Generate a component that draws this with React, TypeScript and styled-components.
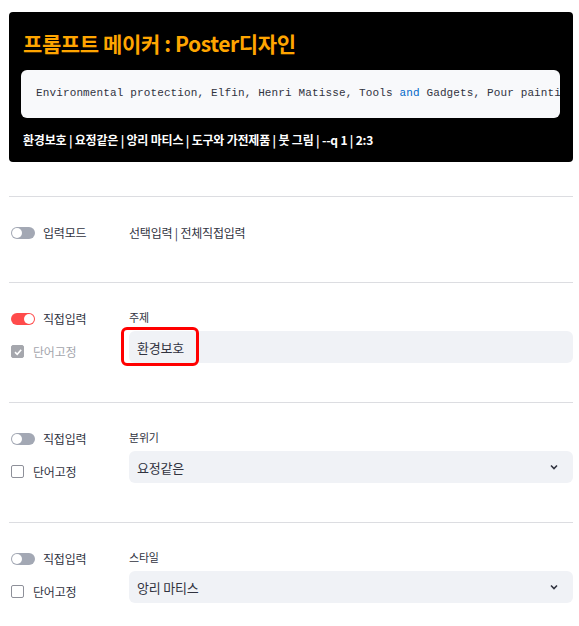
import React from "react";
import styled, { createGlobalStyle } from "styled-components";

const GlobalStyle = createGlobalStyle`
  body {
    margin: 0;
    background: #ffffff;
    font-family: "Noto Sans CJK KR", "Noto Sans", sans-serif;
    color: #31333f;
  }
`;

const Page = styled.div`
  padding: 12px 6px 0 9px;
  width: 564px;
`;

const Header = styled.div`
  background: #000000;
  border-radius: 4px;
  padding: 16px 13px 12px 12px;
`;

const Title = styled.h1`
  margin: 0 0 0 2px;
  color: #ffa500;
  font-size: 21px;
  font-weight: 700;
  line-height: 30px;
  letter-spacing: -0.4px;
`;

const CodeBox = styled.pre`
  margin: 12px 0 0;
  background: #f8f9fb;
  border-radius: 6px;
  height: 48px;
  box-sizing: border-box;
  padding: 0 0 3px 15px;
  display: flex;
  align-items: center;
  overflow: hidden;
  white-space: pre;
  font-family: "Liberation Mono", "DejaVu Sans Mono", monospace;
  font-size: 11px;
  letter-spacing: 0.13px;
  color: #31333f;
`;

const Keyword = styled.span`
  color: #0068c9;
`;

const Summary = styled.div`
  margin: 12px 0 0 2px;
  color: #ffffff;
  font-size: 12px;
  font-weight: 700;
  line-height: 20px;
  letter-spacing: -0.2px;
`;

const Section = styled.div<{ $top: number; $bottom: number }>`
  border-top: 1px solid #dcdde1;
  padding: ${(p) => p.$top}px 0 ${(p) => p.$bottom}px;
  display: flex;
`;

const FirstSection = styled(Section)`
  margin-top: 34px;
`;

const LeftCol = styled.div`
  width: 120px;
  box-sizing: border-box;
  padding-left: 2px;
  display: flex;
  flex-direction: column;
  gap: 14px;
`;

const RightCol = styled.div`
  flex: 1;
  display: flex;
  flex-direction: column;
`;

const ControlRow = styled.div`
  display: flex;
  align-items: center;
  height: 19px;
  gap: 8px;
  font-size: 12px;
  letter-spacing: -0.2px;
`;

const Track = styled.div<{ $on?: boolean }>`
  width: 24px;
  height: 12px;
  border-radius: 6px;
  background: ${(p) => (p.$on ? "#ff4b4b" : "#a3a8b4")};
  position: relative;
  flex-shrink: 0;
`;

const Knob = styled.div<{ $on?: boolean }>`
  position: absolute;
  top: 1px;
  left: ${(p) => (p.$on ? "13px" : "1px")};
  width: 10px;
  height: 10px;
  border-radius: 50%;
  background: #ffffff;
`;

const Box = styled.div<{ $checked?: boolean }>`
  width: 13px;
  height: 13px;
  border-radius: 2px;
  margin-right: 1px;
  box-sizing: border-box;
  border: 1px solid ${(p) => (p.$checked ? "#a5a7ad" : "#8e9099")};
  background: ${(p) => (p.$checked ? "#a5a7ad" : "#ffffff")};
  display: flex;
  align-items: center;
  justify-content: center;
  flex-shrink: 0;
`;

const BoxLabel = styled.span<{ $disabled?: boolean }>`
  color: ${(p) => (p.$disabled ? "#a4a6ad" : "#31333f")};
`;

const PlainText = styled.div`
  font-size: 12px;
  line-height: 19px;
  letter-spacing: -0.2px;
`;

const FieldLabel = styled.div`
  font-size: 11px;
  line-height: 16px;
  margin-bottom: 6px;
  letter-spacing: -0.2px;
`;

const Field = styled.div`
  position: relative;
  height: 32px;
  border-radius: 6px;
  background: #f0f2f6;
  display: flex;
  align-items: center;
  justify-content: space-between;
  padding: 0 14px 0 8px;
  font-size: 13px;
  letter-spacing: -0.2px;
`;

const Highlight = styled.div`
  position: absolute;
  left: -8px;
  top: -4px;
  width: 72px;
  height: 33px;
  border: 3px solid #ff0000;
  border-radius: 6px;
`;

function Toggle({ on, label }: { on?: boolean; label: string }) {
  return (
    <ControlRow>
      <Track $on={on}>
        <Knob $on={on} />
      </Track>
      <span>{label}</span>
    </ControlRow>
  );
}

function Check({ checked }: { checked?: boolean }) {
  return (
    <ControlRow>
      <Box $checked={checked}>
        {checked ? (
          <svg width="10" height="10" viewBox="0 0 10 10">
            <path d="M2 5.2 L4.2 7.3 L8.2 2.8" stroke="#fff" strokeWidth="1.6" fill="none" />
          </svg>
        ) : null}
      </Box>
      <BoxLabel $disabled={checked}>단어고정</BoxLabel>
    </ControlRow>
  );
}

function Chevron() {
  return (
    <svg width="10" height="10" viewBox="0 0 10 10">
      <path d="M2 3.5 L5 6.5 L8 3.5" stroke="#31333f" strokeWidth="1.6" fill="none" />
    </svg>
  );
}

const fields = [
  { label: "분위기", value: "요정같은" },
  { label: "스타일", value: "앙리 마티스" },
];

export default function App() {
  return (
    <>
      <GlobalStyle />
      <Page>
        <Header>
          <Title>프롬프트 메이커 : Poster디자인</Title>
          <CodeBox>
            Environmental protection, Elfin, Henri Matisse, Tools <Keyword>and</Keyword> Gadgets, Pour painti
          </CodeBox>
          <Summary>환경보호 | 요정같은 | 앙리 마티스 | 도구와 가전제품 | 붓 그림 | --q 1 | 2:3</Summary>
        </Header>

        <FirstSection $top={26} $bottom={40}>
          <LeftCol>
            <Toggle label="입력모드" />
          </LeftCol>
          <RightCol>
            <PlainText>선택입력 | 전체직접입력</PlainText>
          </RightCol>
        </FirstSection>

        <Section $top={26} $bottom={39}>
          <LeftCol>
            <Toggle on label="직접입력" />
            <Check checked />
          </LeftCol>
          <RightCol>
            <FieldLabel>주제</FieldLabel>
            <Field>
              <span>환경보호</span>
              <Highlight />
            </Field>
          </RightCol>
        </Section>

        {fields.map((f) => (
          <Section key={f.label} $top={26} $bottom={39}>
            <LeftCol>
              <Toggle label="직접입력" />
              <Check />
            </LeftCol>
            <RightCol>
              <FieldLabel>{f.label}</FieldLabel>
              <Field>
                <span>{f.value}</span>
                <Chevron />
              </Field>
            </RightCol>
          </Section>
        ))}
      </Page>
    </>
  );
}
